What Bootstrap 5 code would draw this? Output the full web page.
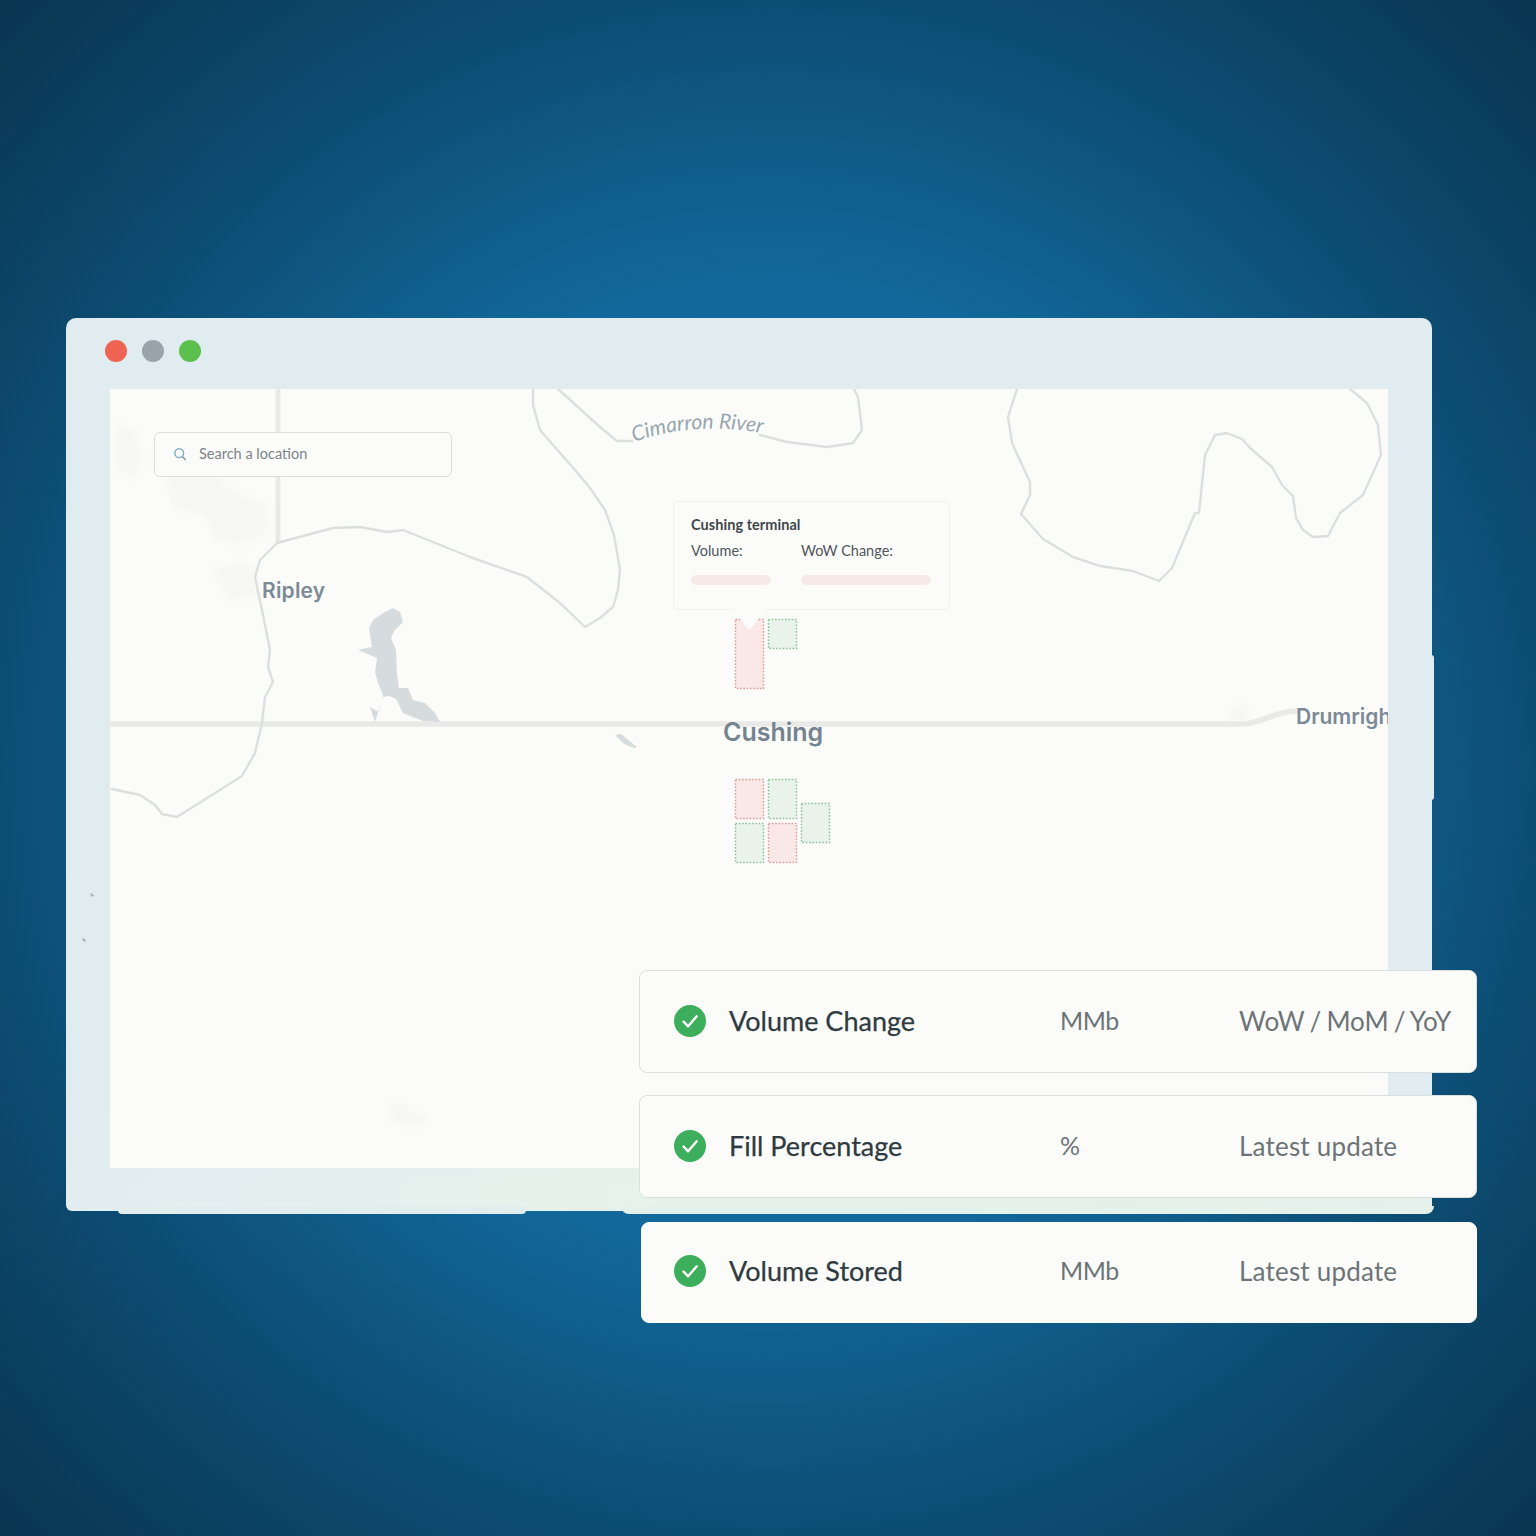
<!DOCTYPE html>
<html lang="en">
<head>
  <meta charset="UTF-8" />
  <meta name="viewport" content="width=device-width, initial-scale=1.0"/>
  <title>Cushing terminal map</title>
  <link href="https://cdn.jsdelivr.net/npm/bootstrap@5.3.2/dist/css/bootstrap.min.css" rel="stylesheet"/>
  <script src="https://cdn.jsdelivr.net/npm/bootstrap@5.3.2/dist/js/bootstrap.bundle.min.js"></script>
  <style>
    html, body { height: 1536px; overflow: hidden; }
    body {
      position: relative;
      padding: 318px 0 0 66px;
      font-family: "Lato", "Liberation Sans", sans-serif;
      background: radial-gradient(circle 1086px at 50% 50%, #1371a5 0%, #12689a 45%, #0d4e75 70%, #093550 100%);
    }
    .app-window {
      position: relative;
      width: 1366px;
      height: 893px;
      border-radius: 10px 10px 6px 6px;
      background:
        linear-gradient(180deg, #e1ecf1 88%, rgba(225, 236, 241, 0) 97%),
        linear-gradient(90deg, #e1edf1 0%, #e6f3ea 42%, #e3f0ec 100%);
    }
    .bump { position: absolute; }
    .bump-right { left: 1360px; top: 337px; width: 8px; height: 145px; border-radius: 0 3px 3px 0; background: #e1ecf1; }
    .bump-bottom-a { left: 52px; top: 888px; width: 408px; height: 8px; border-radius: 0 0 4px 4px; background: #e2eeee; }
    .bump-bottom-b { left: 555px; top: 888px; width: 813px; height: 8px; border-radius: 0 0 8px 8px; background: #e5f2ec; }
    .speck { position: absolute; width: 4px; height: 2px; border-radius: 1px; background: #a4adb3; transform: rotate(40deg); }
    .speck-a { left: 24px; top: 576px; }
    .speck-b { left: 16px; top: 621px; }
    .title-bar { height: 71px; padding: 0 0 6px 39px; gap: 15px; }
    .win-dot { width: 22px; height: 22px; border-radius: 50%; }
    .dot-red { background: #ee6352; }
    .dot-grey { background: #9aa3ab; }
    .dot-green { background: #5cc04f; }
    .map-pane {
      position: relative;
      width: 1278px;
      height: 779px;
      margin-left: 44px;
      overflow: hidden;
      background: #fbfcfa;
    }
    .map-art { position: absolute; inset: 0; width: 1278px; height: 779px; }
    .soft-patch { filter: blur(3px); }
    .soft-line { filter: blur(.5px); }
    .search-box {
      position: absolute; left: 44px; top: 43px; width: 298px; height: 45px;
      padding: 0 0 2px 18px; gap: 12px;
      background: #fbfcfa; border: 1.5px solid #dddedb; border-radius: 6px;
      font-size: 14.5px; color: #7c8489;
    }
    .place { position: absolute; line-height: 1; font-family: "Inter", "Liberation Sans", sans-serif; font-weight: 600; color: #7d8a96; white-space: nowrap; }
    .place-ripley { left: 152px; top: 191px; font-size: 21px; letter-spacing: .2px; }
    .place-cushing { left: 613px; top: 331px; font-size: 25px; color: #74838f; }
    .place-drum { left: 1186px; top: 317px; font-size: 21px; }
    .terminal-tip {
      position: absolute; left: 563px; top: 112px; width: 277px; height: 109px;
      padding: 16px 17px 0;
      background: #fbfcfa; border: 1.5px solid #f0f0ee; border-radius: 5px;
      color: #4f565b; font-size: 14.5px; line-height: 1;
    }
    .terminal-tip::after {
      content: ""; position: absolute; left: 59px; top: 107px;
      width: 32px; height: 20px;
      background: #fbfcfa;
      clip-path: polygon(0 0, 100% 0, 55% 100%, 45% 100%);
    }
    .tip-title { font-weight: 700; color: #3f464b; margin-bottom: 11px; letter-spacing: .05px; }
    .tip-col-a { width: 110px; }
    .tip-bar { height: 10px; margin-top: 17px; border-radius: 5px; background: #f7e9e8; }
    .bar-a { width: 80px; }
    .bar-b { width: 130px; }
    .metric-stack { position: absolute; left: 639px; top: 970px; width: 838px; gap: 22px; }
    .metric-card {
      height: 103px; padding: 0 0 1px 34px;
      background: #fbfcfa; border: 1.5px solid #dcdfdf; border-radius: 8px;
      font-size: 26px;
    }
    .metric-card.last-card { height: 101px; margin: 2px 0 0 2px; padding: 0 0 3px 32px; border-color: #fbfcfa; }
    .check-icon { width: 32px; height: 32px; flex: none; }
    .metric-name { width: 331px; margin-left: 23px; font-size: 27px; color: #2f3a40; -webkit-text-stroke: .25px #2f3a40; }
    .metric-unit { width: 179px; font-size: 25px; letter-spacing: -.5px; color: #6d7478; }
    .metric-span { color: #6d7478; white-space: nowrap; letter-spacing: .2px; }
    .metric-span.tight-span { letter-spacing: 0; word-spacing: -1.5px; }
  </style>
</head>
<body>

  <div class="app-window">
    <div class="bump bump-right"></div>
    <div class="bump bump-bottom-a"></div>
    <div class="bump bump-bottom-b"></div>
    <span class="speck speck-a"></span>
    <span class="speck speck-b"></span>
    <div class="title-bar d-flex align-items-center">
      <span class="win-dot dot-red"></span>
      <span class="win-dot dot-grey"></span>
      <span class="win-dot dot-green"></span>
    </div>

    <div class="map-pane">
      <svg class="map-art" viewBox="110 389 1278 779" xmlns="http://www.w3.org/2000/svg">
        <!-- faint built up patches -->
        <g class="soft-patch" fill="#f6f7f5">
          <path d="M115 425l20 5 8 30-10 20-20-15zM165 470l40-5 25 25 35 15 5 25-20 15-35-5-10-25-30-5zM212 570l25-8 18 4 5 30-30 6z"/>
          <path d="M1228 722l5-14 12-5 5 19zM390 1102l15 2 8 8 18 6-8 8-30-2z"/>
        </g>
        <g class="soft-line">
          <!-- road -->
          <g fill="none" stroke="#e9eae7" stroke-linecap="round">
            <path d="M278 389V541" stroke-width="5"/>
            <path d="M108 724H1240C1262 724 1272 712 1296 711" stroke-width="5.5"/>
          </g>
          <!-- river -->
          <g fill="none" stroke="#dcdfe0" stroke-width="2.4" stroke-linejoin="round" stroke-linecap="round">
            <path d="M112 789L140 795 155 805 162 814 177 817 242 776 255 753 262 723 265 697 273 682 268 667 270 650 262 610 255 577 260 560 277 543 333 528 360 527 387 532 403 530 470 557 527 577 560 603 585 627 600 618 613 607 618 590 620 570 614 535 605 510 590 488 575 470 540 430 533 405 533 389"/>
            <path d="M558 389L600 427 617 441H632"/>
            <path d="M760 435L787 442 827 447 853 443 862 430 858 397 854 389"/>
            <path d="M1017 389L1008 417 1012 443 1030 482 1030 495 1021 514 1043 539 1073 557 1100 566 1133 571 1159 581 1172 568 1195 513 1199 513 1205 455 1215 435 1227 433 1242 439 1250 448 1272 467 1282 485 1293 496 1296 518 1303 530 1313 537 1328 536 1340 513 1363 495 1381 455 1378 425 1367 403 1350 389"/>
          </g>
          <!-- lake -->
          <path fill="#d6dbde" d="M393 608L400 612 403 622 395 630 391 638 396 650 397 675 399 688 408 688 413 700 425 703 435 713 440 722 423 721 410 716 403 713 396 699 389 696 383 697 375 722 370 707 379 712 383 695 378 683 375 672 377 658 358 650 372 647 369 628 373 620 383 613z"/>
          <path fill="#d6dbde" d="M615 735l6-1 16 13-3 1-10-4z"/>
        </g>
        <!-- storage blocks -->
        <g stroke-width="1.5" stroke-dasharray="1.6 1.7">
          <g fill="#f9e8e6" stroke="#e39a96">
            <rect x="735.5" y="619.5" width="28" height="69"/>
            <rect x="735.5" y="779.5" width="28" height="39"/>
            <rect x="768.5" y="823.5" width="28" height="39"/>
          </g>
          <g fill="#e9f3ea" stroke="#8cc296">
            <rect x="768.5" y="619.5" width="28" height="29"/>
            <rect x="768.5" y="779.5" width="28" height="39"/>
            <rect x="801.5" y="803.5" width="28" height="39"/>
            <rect x="735.5" y="823.5" width="28" height="39"/>
          </g>
        </g>
        <path id="riverLabel" fill="none" d="M634 442Q696 420 766 434"/>
        <text font-family="Lato, sans-serif" font-style="italic" font-size="21" fill="#98a6af"><textPath href="#riverLabel">Cimarron River</textPath></text>
      </svg>

      <div class="search-box d-flex align-items-center">
        <svg width="14" height="14" viewBox="0 0 14 14" fill="none" stroke="#7fb0c8" stroke-width="1.5" stroke-linecap="round"><circle cx="6.2" cy="6.2" r="4.4"/><path d="M9.6 9.8l2.6 2.8" stroke="#8a949a"/></svg>
        <span>Search a location</span>
      </div>

      <span class="place place-ripley">Ripley</span>
      <span class="place place-cushing">Cushing</span>
      <span class="place place-drum">Drumright</span>

      <div class="terminal-tip">
        <div class="tip-title">Cushing terminal</div>
        <div class="d-flex">
          <div class="tip-col-a">Volume:<div class="tip-bar bar-a"></div></div>
          <div>WoW Change:<div class="tip-bar bar-b"></div></div>
        </div>
      </div>
    </div>
  </div>

  <div class="metric-stack d-flex flex-column">
    <div class="metric-card d-flex align-items-center">
      <svg class="check-icon" viewBox="0 0 32 32"><circle cx="16" cy="16" r="16" fill="#3dae5b"/><path d="M9.5 16.5l4.6 4.8 8.6-10" fill="none" stroke="#fff" stroke-width="2.4" stroke-linecap="round" stroke-linejoin="round"/></svg>
      <div class="metric-name">Volume Change</div>
      <div class="metric-unit">MMb</div>
      <div class="metric-span tight-span">WoW / MoM / YoY</div>
    </div>
    <div class="metric-card d-flex align-items-center">
      <svg class="check-icon" viewBox="0 0 32 32"><circle cx="16" cy="16" r="16" fill="#3dae5b"/><path d="M9.5 16.5l4.6 4.8 8.6-10" fill="none" stroke="#fff" stroke-width="2.4" stroke-linecap="round" stroke-linejoin="round"/></svg>
      <div class="metric-name">Fill Percentage</div>
      <div class="metric-unit">%</div>
      <div class="metric-span">Latest update</div>
    </div>
    <div class="metric-card last-card d-flex align-items-center">
      <svg class="check-icon" viewBox="0 0 32 32"><circle cx="16" cy="16" r="16" fill="#3dae5b"/><path d="M9.5 16.5l4.6 4.8 8.6-10" fill="none" stroke="#fff" stroke-width="2.4" stroke-linecap="round" stroke-linejoin="round"/></svg>
      <div class="metric-name">Volume Stored</div>
      <div class="metric-unit">MMb</div>
      <div class="metric-span">Latest update</div>
    </div>
  </div>

</body>
</html>
